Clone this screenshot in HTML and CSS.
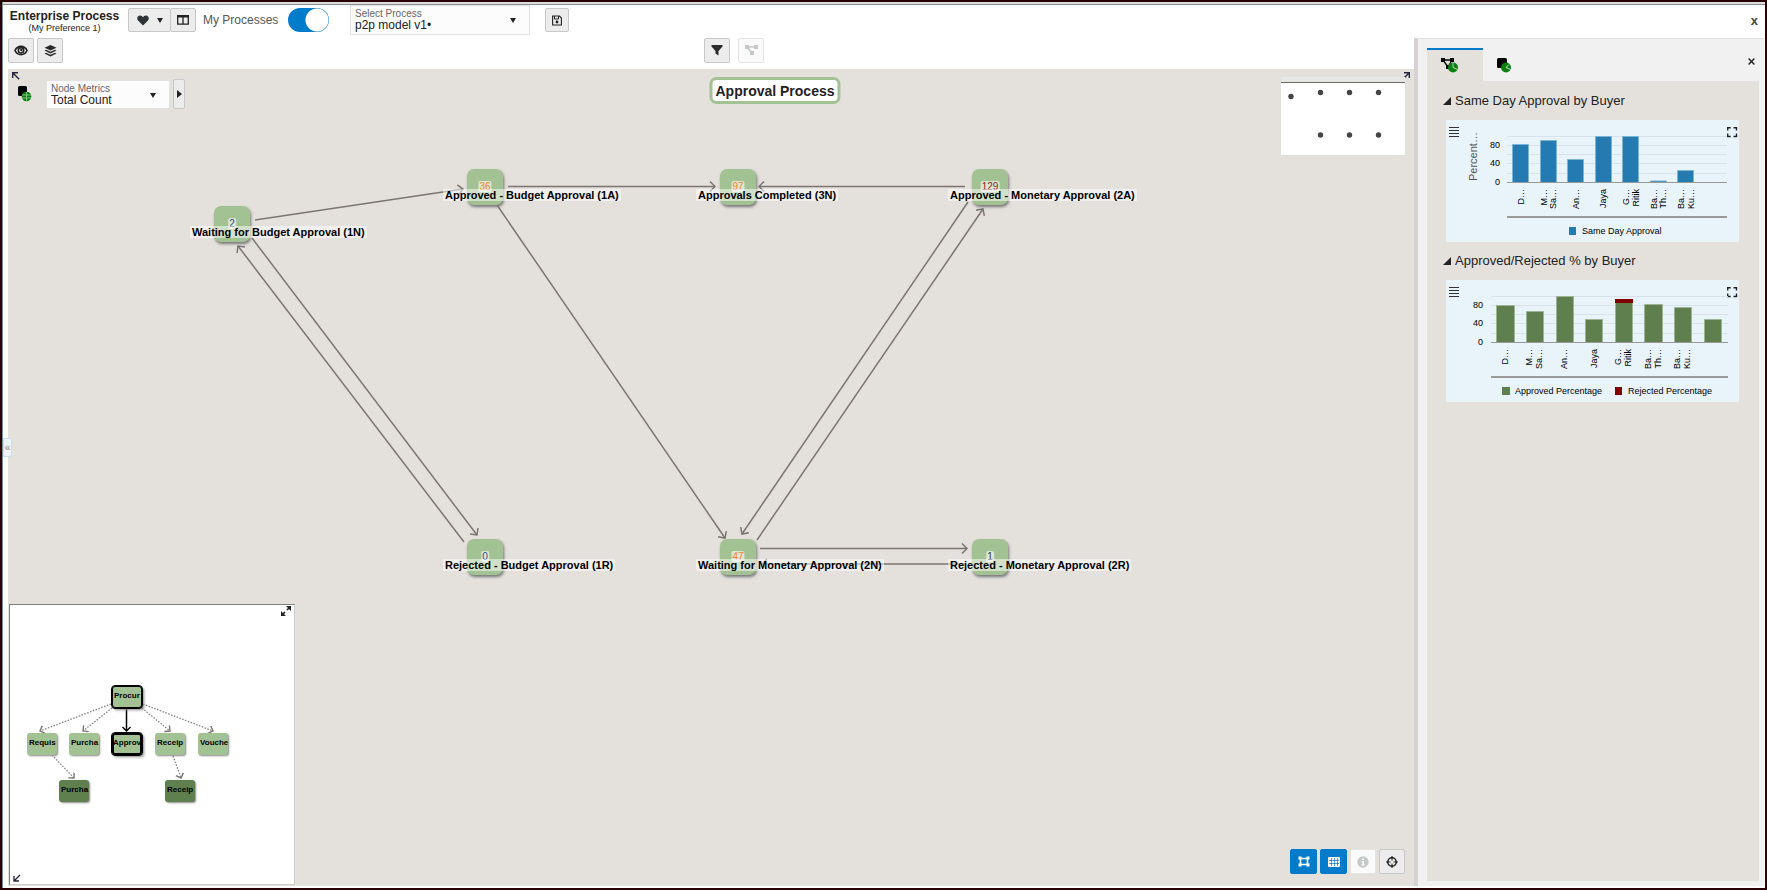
FILE: index.html
```html
<!DOCTYPE html>
<html lang="en">
<head>
<meta charset="utf-8">
<title>Enterprise Process</title>
<link rel="stylesheet" href="styles.css">
</head>
<body>
<div class="app">
  <header class="topbar">
    <div class="brand"><h1>Enterprise Process</h1><span>(My Preference 1)</span></div>
    <div class="btn-group">
      <button class="btn wide" aria-label="Favourites"><svg width="12" height="11" viewBox="0 0 12 11"><path d="M6 10.5 1 5.600C-.6 3.700.400.500 3 .500 4.500.500 5.500 1.500 6 2.300 6.500 1.500 7.500.500 9 .500c2.600 0 3.600 3.200 2 5.100z" fill="#2f3337"/></svg><i class="caret"></i></button>
      <button class="btn" aria-label="Columns"><svg width="12" height="10" viewBox="0 0 12 10"><path d="M.7 1h10.600v8.200H.7zM6 1v8" fill="none" stroke="#222" stroke-width="1.300"/><path d="M0 0h12v2.500H0z" fill="#222"/></svg></button>
    </div>
    <label class="toggle"><span>My Processes</span><input type="checkbox" role="switch" checked></label>
    <div class="field process"><label for="process">Select Process</label><select id="process"><option>p2p model v1•</option></select><i class="caret"></i></div>
    <button class="btn save" aria-label="Save"><svg width="10" height="11" viewBox="0 0 10 11"><path d="M.6 1h6.900L9.400 3v7H.6z" fill="none" stroke="#222" stroke-width="1.100"/><path d="M2.500 1v3h4V1" fill="none" stroke="#222"/><circle cx="5" cy="7" r="1.400" fill="#222"/></svg></button>
    <button class="plain close-app" aria-label="Close">x</button>
  </header>
  <div class="body">
    <main class="main">
      <div class="tools">
        <button class="btn sq" aria-label="View"><svg width="14" height="11" viewBox="0 0 14 11"><path d="M1 5.500C3.500 0 10.500 0 13 5.500 10.500 11 3.500 11 1 5.500z" fill="none" stroke="#222" stroke-width="1.700"/><circle cx="7" cy="5.300" r="2.700" fill="none" stroke="#222" stroke-width="1.600"/><circle cx="7.300" cy="5" r="1.200" fill="#222"/></svg></button>
        <button class="btn sq" aria-label="Layers"><svg width="13" height="12" viewBox="0 0 13 12"><path d="M6.500 0 12.500 2.800 6.500 5.500.5 2.800zM2 4.800.5 5.600l6 2.800 6-2.800-1.500-.800-4.500 2zM2 7.800l-1.500.8 6 2.900 6-2.900-1.500-.8-4.500 2z" fill="#2b2b2b"/></svg></button>
        <div class="center-tools">
          <button class="btn sq" aria-label="Filter"><svg width="12" height="11" viewBox="0 0 12 11"><path d="M.5 0h11v1.500L7.500 6v4.500L4.500 8.500V6L.5 1.500z" fill="#2b2b2b"/></svg></button>
          <button class="btn sq" disabled aria-label="Flow"><svg width="13" height="11" viewBox="0 0 13 11"><path d="M0 0h4v4H0zM9 0h4v4H9zM5 6h4v4H5z" fill="#c6c8ca"/><path d="M3 2h7M3 3l4 5" stroke="#c6c8ca" stroke-width="1.600"/></svg></button>
        </div>
      </div>
      <section class="canvas">
        <svg class="edges" width="1200" height="560" viewBox="8 69 1200 560">
          <defs><marker id="ah" markerUnits="userSpaceOnUse" markerWidth="10" markerHeight="12" refX="7" refY="6" orient="auto"><path d="M2 1 7 6 2 11" fill="none" stroke="#7b7571" stroke-width="1.500"/></marker></defs>
          <g stroke="#7b7571" stroke-width="1.500" marker-end="url(#ah)">
            <path d="M255 220 463 189"/><path d="M508 186.500H715"/><path d="M965 186.500H759"/>
            <path d="M252 238 477 535"/><path d="M464 542 238 246"/><path d="M497 205 725 538"/>
            <path d="M968 202 742 534"/><path d="M757 540 983 209"/><path d="M760 548.500H967"/><path d="M965 564H762"/>
          </g>
        </svg>
        <div class="node n1"><b class="blue">2</b><span>Waiting for Budget Approval (1N)</span></div>
        <div class="node n2"><b class="orange">36</b><span>Approved - Budget Approval (1A)</span></div>
        <div class="node n3"><b class="orange">97</b><span>Approvals Completed (3N)</span></div>
        <div class="node n4"><b class="red">129</b><span>Approved - Monetary Approval (2A)</span></div>
        <div class="node n5"><b class="blue">0</b><span>Rejected - Budget Approval (1R)</span></div>
        <div class="node n6"><b class="orange">47</b><span>Waiting for Monetary Approval (2N)</span></div>
        <div class="node n7"><b>1</b><span>Rejected - Monetary Approval (2R)</span></div>

        <svg class="corner-left" width="8" height="8" viewBox="0 0 8 8"><path d="M.7 6V.7H6M.7.7l6.500 6.500" fill="none" stroke="#24243c" stroke-width="1.400"/></svg>
        <svg class="corner-right" width="8" height="8" viewBox="0 0 8 8"><path d="M2 .7h5.300V6M7.300.7.7 7.300" fill="none" stroke="#24243c" stroke-width="1.400"/></svg>
        <div class="metrics">
          <svg width="14" height="16" viewBox="0 0 14 16"><rect width="9" height="10" rx="1.500"/><circle cx="8.500" cy="10.500" r="4.800" fill="#0b8010"/><path d="M8.500 6v9.500M4 9h9M4 12h9" stroke="#9c9" stroke-width=".8"/></svg>
          <div class="field metric"><label for="metric">Node Metrics</label><select id="metric"><option>Total Count</option></select><i class="caret"></i></div>
          <button class="btn more" aria-label="More"><i class="caret right"></i></button>
        </div>
        <h2 class="title">Approval Process</h2>
        <svg class="minimap" width="124" height="78" viewBox="0 0 124 78"><path d="M0 0h124v4H0z" fill="#e5e7e6"/><path d="M0 5h124v73H0z" fill="#fff"/><path d="M0 5.500h124" stroke="#707070"/><g fill="#444"><circle cx="10" cy="19.500" r="2.700"/><circle cx="39.500" cy="15.500" r="2.700"/><circle cx="68.500" cy="15.500" r="2.700"/><circle cx="97.500" cy="15.500" r="2.700"/><circle cx="39.500" cy="58" r="2.700"/><circle cx="68.500" cy="58" r="2.700"/><circle cx="97.500" cy="58" r="2.700"/></g></svg>

        <div class="tree">
          <svg class="tree-edges" width="284" height="279" viewBox="10 605 284 279">
            <defs><marker id="tg" markerUnits="userSpaceOnUse" markerWidth="8" markerHeight="9" refX="5" refY="4" orient="auto"><path d="M1 0 5 4 1 8" fill="none" stroke="#777" stroke-width="1.400"/></marker>
            <marker id="tb" markerUnits="userSpaceOnUse" markerWidth="8" markerHeight="9" refX="5" refY="4" orient="auto"><path d="M1 0 5 4 1 8" fill="none" stroke="#000" stroke-width="1.400"/></marker></defs>
            <g stroke="#808080" stroke-width="1.300" stroke-dasharray="1.500 1.500" marker-end="url(#tg)"><path d="M111 704 40 731"/><path d="M112 708 83 731"/><path d="M142 708 170 731"/><path d="M143 704 213 731"/><path d="M52 755 74 778"/><path d="M173 756 181 778"/></g>
            <path d="M126.500 709V731" stroke="#000" stroke-width="1.500" marker-end="url(#tb)"/>
            <path d="M291 606v5l-5-5zM281 616v-5l5 5z" fill="#222"/><path d="m290 607-3 3m-2 2-3 3" stroke="#222" stroke-width="1.600"/>
            <path d="m20 875-6 6m0-5v5h5" fill="none" stroke="#24243c" stroke-width="1.300"/>
          </svg>
          <div class="leaf root t1">Procur</div>
          <div class="leaf t2">Requis</div><div class="leaf t3">Purcha</div><div class="leaf current t4">Approv</div><div class="leaf t5">Receip</div><div class="leaf t6">Vouche</div>
          <div class="leaf dark t7">Purcha</div><div class="leaf dark t8">Receip</div>
        </div>
        <div class="bottom-tools">
          <button class="btn sq on" aria-label="Select"><svg width="12" height="11" viewBox="0 0 12 11"><path d="M2.500 2.500h7v6h-7z" fill="none" stroke="#fff" stroke-width="1.600"/><path d="M.5.500h3v3h-3zM8.500.500h3v3h-3zM.5 7.500h3v3h-3zM8.500 7.500h3v3h-3z" fill="#fff"/></svg></button>
          <button class="btn sq on" aria-label="Grid"><svg width="12" height="10" viewBox="0 0 12 10"><rect width="12" height="10" rx="1" fill="#fff"/><path d="M3.500 1v8M6.500 1v8M9.500 1v8M1 3.500h10M1 6.500h10" stroke="#0572ce" stroke-width=".7"/></svg></button>
          <button class="btn sq" disabled aria-label="Information"><svg width="12" height="12" viewBox="0 0 12 12"><circle cx="6" cy="6" r="5.700" fill="#c6c8c8"/><path d="M5 2.500h2v1.500H5zM4.500 5H7v3.500h.8v1H4.500v-1h.8V6h-.8z" fill="#fff"/></svg></button>
          <button class="btn sq" aria-label="Center"><svg width="12" height="12" viewBox="0 0 12 12"><circle cx="6" cy="6" r="4.200" fill="none" stroke="#222" stroke-width="1.500"/><path d="M6 0v4.500M6 7.500V12M0 6h4.500M7.500 6H12" stroke="#222" stroke-width="1.100"/></svg></button>
        </div>
      </section>
    </main>
    <aside class="side">
      <nav class="tabs">
        <button class="tab active" aria-label="Process charts"><svg width="18" height="15" viewBox="0 0 18 15"><path d="M0 0h4v4H0zM9 0h4v4H9zM5 7h4v4H5z"/><path d="M3 2h7M2 2l5 7 4-7" stroke="#000" stroke-width="1.300" fill="none"/><circle cx="12" cy="9.500" r="5" fill="#0b8010"/><path d="M12 9.500V4.500M12 9.500l4.500 2" stroke="#e4e1dc" stroke-width=".8" fill="none"/></svg></button>
        <button class="tab" aria-label="Node charts"><svg width="15" height="15" viewBox="0 0 15 15"><rect width="10" height="10" rx="1.500"/><circle cx="9" cy="9.500" r="5" fill="#0b8010"/><path d="m9 9.500 4.500 2M9 9.500l3-3" stroke="#f1f1f1" stroke-width=".8" fill="none"/></svg></button>
        <button class="plain close-side" aria-label="Close panel"><svg width="7" height="7" viewBox="0 0 7 7"><path d="m.6.6 5.800 5.800m0-5.800L.6 6.400" stroke="#222" stroke-width="1.400"/></svg></button>
      </nav>
      <div class="side-body">
        <section class="chart-block">
          <h3><svg width="8" height="8" viewBox="0 0 8 8"><path d="M8 0v8H0z" fill="#222"/></svg>Same Day Approval by Buyer</h3>
          <svg class="chart" viewBox="1446 120 293 122">
            <defs><g id="chart-tools"><path d="M1449 127.500h10m-10 3h10m-10 3h10m-10 3h10" stroke="#333" stroke-width="1.200"/><path d="M1727.700 130.500v-2.800h3M1733.500 127.700h3v2.800M1736.500 133.500v3h-3M1730.700 136.500h-3v-3" fill="none" stroke="#222" stroke-width="1.400"/></g></defs>
            <use href="#chart-tools"/>
            <path class="grid" d="M1507 136.500h220m-220 9h220m-220 9h220m-220 9h220m-220 10h220"/>
            <g class="bars blue-bars"><path d="M1512.500 182v-37.500h16v37.500"/><path d="M1540.500 182v-41.500h16v41.500"/><path d="M1567.500 182v-22.500h16v22.500"/><path d="M1595.500 182v-45.500h16v45.500"/><path d="M1622.500 182v-45.500h16v45.500"/><path d="M1650.500 182v-1h16v1"/><path d="M1677.500 182v-11.500h16v11.500"/></g>
            <path class="axis" d="M1507 182.500h220"/><path class="base" d="M1507 217h220"/>
            <g class="ticks"><text x="1500" y="148">80</text><text x="1500" y="166">40</text><text x="1500" y="185">0</text></g>
            <text class="ytitle" transform="translate(1477 181) rotate(-90)">Percent…</text>
            <g class="cats"><text transform="translate(1524 189) rotate(-90)">D…</text><text transform="translate(1547 189) rotate(-90)">M…</text><text transform="translate(1556 189) rotate(-90)">Sa…</text><text transform="translate(1579 189) rotate(-90)">An…</text><text transform="translate(1606 189) rotate(-90)">Jaya</text><text transform="translate(1629 189) rotate(-90)">G…</text><text transform="translate(1639 189) rotate(-90)">Ritik</text><text transform="translate(1657 189) rotate(-90)">Ba…</text><text transform="translate(1666 189) rotate(-90)">Th…</text><text transform="translate(1684 189) rotate(-90)">Ba…</text><text transform="translate(1694 189) rotate(-90)">Ku…</text></g>
            <path d="M1569 227h7v8h-7z" fill="#237bb1"/><text class="legend" x="1582" y="234">Same Day Approval</text>
          </svg>
        </section>
        <section class="chart-block">
          <h3><svg width="8" height="8" viewBox="0 0 8 8"><path d="M8 0v8H0z" fill="#222"/></svg>Approved/Rejected % by Buyer</h3>
          <svg class="chart" viewBox="1446 120 293 122">
            <use href="#chart-tools"/>
            <path class="grid" d="M1491 136.500h237m-237 9h237m-237 9h237m-237 9h237m-237 10h237"/>
            <g class="bars green-bars"><path d="M1496.500 182v-36.500h18v36.500"/><path d="M1526.500 182v-30.500h17v30.500"/><path d="M1556.500 182v-45.500h17v45.500"/><path d="M1585.500 182v-22.500h17v22.500"/><path d="M1615.500 182v-39.500h17v39.500"/><path d="M1644.500 182v-37.500h18v37.500"/><path d="M1674.500 182v-34.500h17v34.500"/><path d="M1704.500 182v-22.500h17v22.500"/></g>
            <path d="M1615 139h18v4h-18z" fill="#800000"/>
            <path class="axis" d="M1491 182.500h237"/><path class="base" d="M1491 217h237"/>
            <g class="ticks"><text x="1483" y="148">80</text><text x="1483" y="166">40</text><text x="1483" y="185">0</text></g>
            <g class="cats"><text transform="translate(1508 189) rotate(-90)">D…</text><text transform="translate(1532 189) rotate(-90)">M…</text><text transform="translate(1542 189) rotate(-90)">Sa…</text><text transform="translate(1567 189) rotate(-90)">An…</text><text transform="translate(1597 189) rotate(-90)">Jaya</text><text transform="translate(1621 189) rotate(-90)">G…</text><text transform="translate(1631 189) rotate(-90)">Ritik</text><text transform="translate(1651 189) rotate(-90)">Ba…</text><text transform="translate(1661 189) rotate(-90)">Th…</text><text transform="translate(1680 189) rotate(-90)">Ba…</text><text transform="translate(1690 189) rotate(-90)">Ku…</text></g>
            <path d="M1502 227h8v8h-8z" fill="#5f7f4f"/><text class="legend" x="1515" y="234">Approved Percentage</text>
            <path d="M1615 227h7v8h-7z" fill="#800000"/><text class="legend" x="1628" y="234">Rejected Percentage</text>
          </svg>
        </section>
      </div>
    </aside>
  </div>
  <button class="handle" aria-label="Expand">«</button>
</div>
</body>
</html>
```
FILE: styles.css
```css
* { box-sizing: border-box; }
html, body { height: 100%; }
body { margin: 0; font-family: "Liberation Sans", Arial, sans-serif; font-size: 12px; color: #222; background: #fff; }
h1, h2, h3 { margin: 0; }
svg { display: block; flex: none; }
button, select, input { font-family: inherit; margin: 0; }
.app { position: relative; height: 100vh; display: flex; flex-direction: column; border: 2px solid #2b0004; padding: 0 1px 2px 6px; background: #fff; box-shadow: inset 1px 0 #7b8fa0, inset 0 2px #ddd, inset 0 3px #8c8c8c; }
.topbar { display: flex; align-items: center; height: 36px; }
.brand { width: 113px; text-align: center; line-height: 11px; margin-right: 7px; font-size: 9px; padding-top: 3px; }
.brand h1 { font-size: 12px; line-height: 14px; white-space: nowrap; }
.btn-group { display: flex; }
.btn { display: flex; align-items: center; justify-content: center; gap: 8px; height: 24px; width: 26px; padding: 0; border: 1px solid #c8c8c8; border-radius: 2px; background: #ececec; }
.btn.wide { width: 43px; margin-right: -1px; }
.btn.sq { height: 25px; }
.btn:disabled { background: #fafafa; border-color: #e4e4e4; }
.btn.on { background: #037bcb; border-color: #037bcb; width: 27px; }
.caret { width: 0; height: 0; border: solid transparent; border-width: 5px 3px 0; border-top-color: #222; }
.caret.right { border-width: 4px 0 4px 5px; border-color: transparent transparent transparent #222; }
.toggle { display: flex; align-items: center; color: #555; margin-left: 7px; }
.toggle span { width: 85px; white-space: nowrap; }
.toggle input { appearance: none; width: 41px; height: 24px; border-radius: 12px; background: radial-gradient(circle at 29px 12px, #fff 11px, #037bcb 12px); }
.field { position: relative; display: flex; flex-direction: column; background: #fcfcfc; border: 1px solid #e2e2e2; padding: 2px 4px 0; }
.field label { font-size: 10px; line-height: 11px; color: #666; }
.field select { appearance: none; border: 0; background: none; padding: 0; font-size: 12px; line-height: 13px; height: 13px; color: #222; }
.field .caret { position: absolute; right: 13px; top: 12px; }
.process { width: 180px; height: 30px; margin: 0 15px 0 21px; }
.save { width: 24px; }
.plain { border: 0; padding: 0; background: none; font-size: 13px; font-weight: bold; color: #444; }
.close-app { margin-left: auto; margin-right: 6px; }
.body { flex: 1; display: flex; min-height: 0; }
.main { flex: 1; display: flex; flex-direction: column; min-width: 0; }
.tools { position: relative; display: flex; gap: 3px; height: 31px; flex: none; }
.center-tools { position: absolute; left: 50%; margin-left: -7px; display: flex; gap: 8px; }
.canvas { position: relative; flex: 1; background: #e4e1dc; overflow: hidden; }
.edges, .tree-edges { position: absolute; left: 0; top: 0; }
.node { position: absolute; width: 36px; height: 36px; border-radius: 7px; background: #a3c293; box-shadow: 1px 2px 3px #777; }
.node b { position: absolute; left: 50%; top: 12px; transform: translateX(-50%); font-size: 10px; font-weight: normal; line-height: 11px; padding: 0 1px; background: #ffffff99; border-radius: 2px; color: #334; }
.node .blue { color: #2b4a8b; }
.node .orange { color: #f08426; }
.node .red { color: #8b1a10; }
.node span { position: absolute; left: -24px; top: 20px; padding: 0 2px; white-space: nowrap; font-size: 11px; line-height: 12px; font-weight: bold; color: #000; background: #ffffff80; }
.n1 { left: 206px; top: 137px; }
.n2 { left: 459px; top: 100px; }
.n3 { left: 712px; top: 100px; }
.n4 { left: 964px; top: 100px; }
.n5 { left: 459px; top: 470px; }
.n6 { left: 712px; top: 470px; }
.n7 { left: 964px; top: 470px; }
.corner-left { position: absolute; left: 4px; top: 3px; }
.corner-right { position: absolute; right: 4px; top: 3px; }
.metrics { position: absolute; left: 10px; top: 10px; display: flex; align-items: center; }
.metric { width: 124px; height: 29px; margin: 0 3px 0 14px; }
.more { width: 12px; height: 30px; }
.title { position: absolute; left: 50%; transform: translateX(-50%); top: 8px; margin-left: 64px; padding: 1px 3px 0; height: 27px; border: 3px solid #a3c293; border-radius: 7px; background: #fff; font-size: 14px; line-height: 21px; white-space: nowrap; }
.minimap { position: absolute; right: 9px; top: 8px; }
.tree { position: absolute; left: 1px; bottom: 1px; width: 286px; height: 281px; background: #fff; border: 1px solid #808080; border-right-color: #ccc; border-bottom-color: #ccc; }
.leaf { position: absolute; width: 30px; height: 22px; padding-left: 2px; border-radius: 3px; background: #a3c293; box-shadow: 1px 1px 2px #888; font-size: 8px; line-height: 20px; font-weight: bold; color: #000; }
.root { outline: 1px solid #000; box-shadow: inset 0 0 0 1px #000, 2px 2px 3px #888; }
.current { outline: 1px solid #000; box-shadow: inset 0 0 0 2px #000, 2px 2px 3px #888; padding-left: 1px; }
.dark { background: #5f7f4f; }
.t1 { left: 102px; top: 81px; }
.t2 { left: 17px; top: 128px; }
.t3 { left: 59px; top: 128px; }
.t4 { left: 102px; top: 128px; }
.t5 { left: 145px; top: 128px; }
.t6 { left: 188px; top: 128px; }
.t7 { left: 49px; top: 175px; }
.t8 { left: 155px; top: 175px; }
.bottom-tools { position: absolute; right: 9px; bottom: 12px; display: flex; gap: 3px; }
.side { width: 350px; display: flex; flex-direction: column; padding: 9px 5px 5px 9px; background: #f1f1f1; border-left: 4px solid #d6d2d2; border-top: 1px solid #ddd; }
.tabs { display: flex; height: 33px; flex: none; }
.tab { width: 56px; border: 0; border-top: 2px solid transparent; background: none; padding: 8px 0 0 14px; display: flex; }
.tab.active { background: #e4e1dc; border-top-color: #037bcb; }
.close-side { margin-left: auto; padding: 0 4px 6px 0; }
.side-body { flex: 1; background: #e4e1dc; padding: 10px 20px 0 19px; }
.chart-block { margin-bottom: 9px; }
.chart-block h3 { display: flex; align-items: center; gap: 4px; height: 19px; margin: 0 0 10px -3px; font-size: 13px; font-weight: normal; white-space: nowrap; }
.chart { width: 100%; background: #e8f3fa; }
.grid { fill: none; stroke: #d6e2ec; stroke-width: 1px; }
.axis { stroke: #999; }
.base { stroke: #9b9999; stroke-width: 2px; }
.blue-bars { fill: #237bb1; stroke: #7db4d0; }
.green-bars { fill: #5f7f4f; stroke: #9db592; }
.ticks { text-anchor: end; font-size: 9px; }
.cats { text-anchor: end; font-size: 9px; }
.ytitle { font-size: 11px; fill: #555; }
.legend { font-size: 9px; }
.handle { position: absolute; left: 1px; top: 436px; width: 9px; height: 19px; padding: 0; border: 1px solid #cfdfe8; border-radius: 0 2px 2px 0; background: #eef3f7; font-size: 10px; line-height: 16px; color: #888; }
```
